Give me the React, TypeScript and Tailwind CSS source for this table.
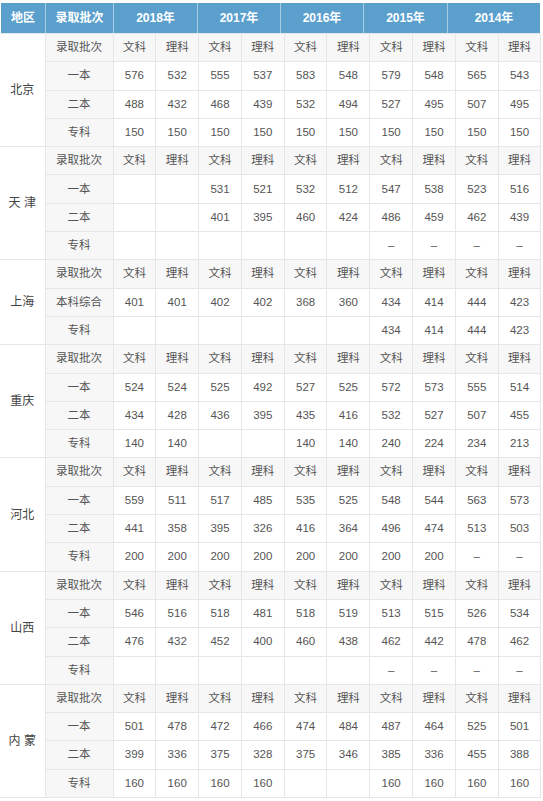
import React from "react";

type Row = { label: string; values: string[] };
type Region = { name: string; rows: Row[] };

const E = "";
const D = "–";

const regions: Region[] = [
  {
    name: "北京",
    rows: [
      { label: "一本", values: ["576", "532", "555", "537", "583", "548", "579", "548", "565", "543"] },
      { label: "二本", values: ["488", "432", "468", "439", "532", "494", "527", "495", "507", "495"] },
      { label: "专科", values: ["150", "150", "150", "150", "150", "150", "150", "150", "150", "150"] },
    ],
  },
  {
    name: "天 津",
    rows: [
      { label: "一本", values: [E, E, "531", "521", "532", "512", "547", "538", "523", "516"] },
      { label: "二本", values: [E, E, "401", "395", "460", "424", "486", "459", "462", "439"] },
      { label: "专科", values: [E, E, E, E, E, E, D, D, D, D] },
    ],
  },
  {
    name: "上海",
    rows: [
      { label: "本科综合", values: ["401", "401", "402", "402", "368", "360", "434", "414", "444", "423"] },
      { label: "专科", values: [E, E, E, E, E, E, "434", "414", "444", "423"] },
    ],
  },
  {
    name: "重庆",
    rows: [
      { label: "一本", values: ["524", "524", "525", "492", "527", "525", "572", "573", "555", "514"] },
      { label: "二本", values: ["434", "428", "436", "395", "435", "416", "532", "527", "507", "455"] },
      { label: "专科", values: ["140", "140", E, E, "140", "140", "240", "224", "234", "213"] },
    ],
  },
  {
    name: "河北",
    rows: [
      { label: "一本", values: ["559", "511", "517", "485", "535", "525", "548", "544", "563", "573"] },
      { label: "二本", values: ["441", "358", "395", "326", "416", "364", "496", "474", "513", "503"] },
      { label: "专科", values: ["200", "200", "200", "200", "200", "200", "200", "200", D, D] },
    ],
  },
  {
    name: "山西",
    rows: [
      { label: "一本", values: ["546", "516", "518", "481", "518", "519", "513", "515", "526", "534"] },
      { label: "二本", values: ["476", "432", "452", "400", "460", "438", "462", "442", "478", "462"] },
      { label: "专科", values: [E, E, E, E, E, E, D, D, D, D] },
    ],
  },
  {
    name: "内 蒙",
    rows: [
      { label: "一本", values: ["501", "478", "472", "466", "474", "484", "487", "464", "525", "501"] },
      { label: "二本", values: ["399", "336", "375", "328", "375", "346", "385", "336", "455", "388"] },
      { label: "专科", values: ["160", "160", "160", "160", E, E, "160", "160", "160", "160"] },
    ],
  },
];

const years = [
  { y: "2018年", w: "w-[84px]" },
  { y: "2017年", w: "w-[83px]" },
  { y: "2016年", w: "w-[83px]" },
  { y: "2015年", w: "w-[84px]" },
  { y: "2014年", w: "w-[93px]" },
];

const font = { fontFamily: '"Liberation Sans", "Noto Sans CJK SC", sans-serif' };

const cell = "border border-[#e6e6e6] text-center align-middle p-0";

export default function App() {
  return (
    <div className="bg-white w-[543px] h-[801px] pt-[3px] pl-[1px]" style={font}>
      <div className="flex h-[30px] bg-[#5b9fcd] text-white font-bold text-[12px] w-[539px]">
        <div className="w-[44px] flex items-center justify-center">地区</div>
        <div className="w-[68px] flex items-center justify-center border-l border-[#a9cde6]">录取批次</div>
        {years.map((y) => (
          <div key={y.y} className={`${y.w} flex items-center justify-center border-l border-[#a9cde6]`}>
            {y.y}
          </div>
        ))}
      </div>
      <table className="border-collapse table-fixed w-[541px] -ml-[1px] text-[11.5px] text-[#555]">
        <colgroup>
          <col className="w-[45px]" />
          <col className="w-[68px]" />
          {Array.from({ length: 10 }).map((_, i) => (
            <col key={i} className="w-[42.8px]" />
          ))}
        </colgroup>
        <tbody>
          {regions.map((r) => (
            <React.Fragment key={r.name}>
              <tr className="h-[28.3px] bg-[#f7f7f7]">
                <td rowSpan={r.rows.length + 1} className={`${cell} bg-white text-[12px] text-[#444] border-l-0`}>
                  {r.name}
                </td>
                <td className={cell}>录取批次</td>
                {Array.from({ length: 10 }).map((_, i) => (
                  <td key={i} className={cell}>
                    {i % 2 === 0 ? "文科" : "理科"}
                  </td>
                ))}
              </tr>
              {r.rows.map((row) => (
                <tr key={row.label} className="h-[28.3px]">
                  <td className={`${cell} bg-[#f7f7f7]`}>{row.label}</td>
                  {row.values.map((v, i) => (
                    <td key={i} className={cell}>
                      {v}
                    </td>
                  ))}
                </tr>
              ))}
            </React.Fragment>
          ))}
        </tbody>
      </table>
    </div>
  );
}
